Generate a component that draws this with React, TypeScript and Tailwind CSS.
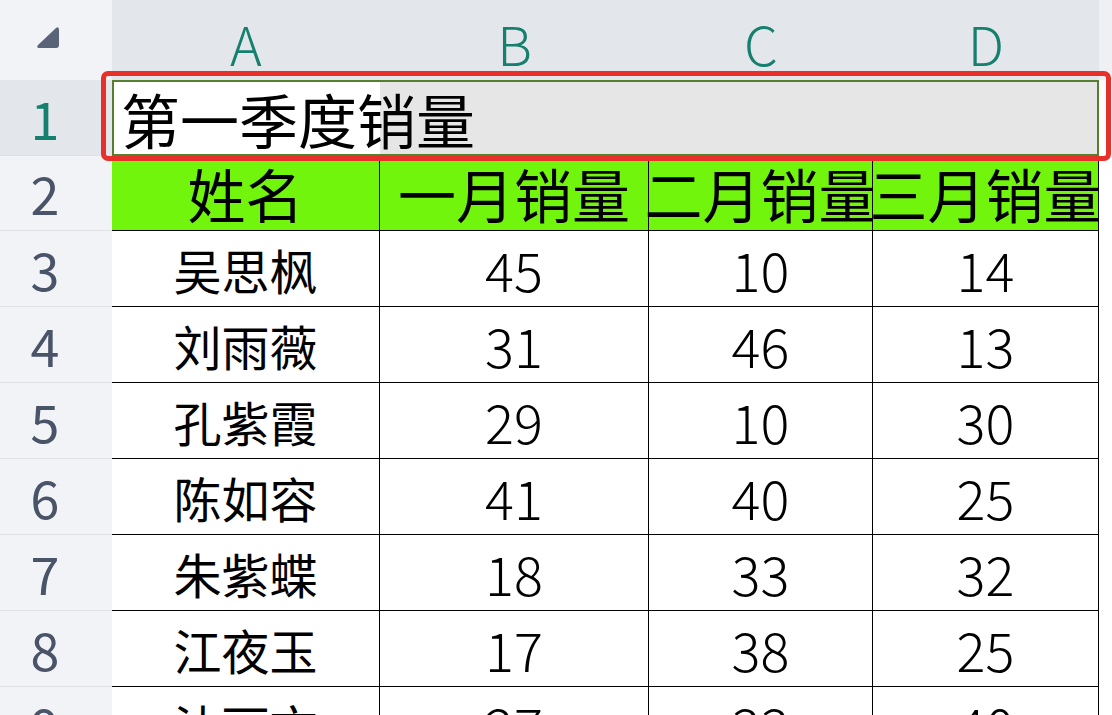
const rows: [string, number, number, number][] = [
  ['吴思枫', 45, 10, 14],
  ['刘雨薇', 31, 46, 13],
  ['孔紫霞', 29, 10, 30],
  ['陈如容', 41, 40, 25],
  ['朱紫蝶', 18, 33, 32],
  ['江夜玉', 17, 38, 25],
  ['沈丽文', 27, 33, 40],
];

const font = { fontFamily: '"Noto Sans CJK SC", "Noto Sans", sans-serif' };

function RowHead({ n, active }: { n: number; active?: boolean }) {
  return (
    <div
      className={`flex items-center justify-center border-b border-[#dde1e6] pr-[22px] text-[52px] leading-none ${
        active ? 'bg-[#e3e6ea] text-[#16806f]' : 'bg-[#f1f3f6] text-[#4a5468]'
      }`}
    >
      {n}
    </div>
  );
}

export default function App() {
  return (
    <div className="relative h-[715px] w-[1112px] overflow-hidden bg-white" style={font}>
      <div className="grid grid-cols-[112px_268px_269px_224px_226px_1fr] grid-rows-[80px_76px_75px_repeat(7,76px)]">
        {/* corner */}
        <div className="flex items-center justify-center bg-[#f1f3f6] pb-[4px] pr-[16px]">
          <svg width="26" height="24" viewBox="0 0 26 24">
            <path d="M21 2 Q24 0 24 4 L24 19 Q24 22 21 22 L4 22 Q1 22 3 19 Z" fill="#5a6478" />
          </svg>
        </div>
        {['A', 'B', 'C', 'D'].map((c) => (
          <div key={c} className="flex items-center justify-center bg-[#e3e6ea] pt-[6px] text-[54px] font-light leading-none text-[#16806f]">
            {c}
          </div>
        ))}
        <div className="bg-[#eef0f3]" />

        {/* row 1 */}
        <RowHead n={1} active />
        <div className="col-span-4 flex items-center overflow-visible whitespace-nowrap border-2 border-[#56802e] bg-[linear-gradient(to_right,#ffffff_266px,#e6e6e6_266px)] pl-[7px] text-[59px] leading-none text-black">
          第一季度销量
        </div>
        <div />

        {/* row 2 */}
        <RowHead n={2} />
        {['姓名', '一月销量', '二月销量', '三月销量'].map((h) => (
          <div
            key={h}
            className="flex items-center justify-center overflow-visible whitespace-nowrap border-b border-r border-black bg-[#72f50c] text-[58px] leading-none text-black"
          >
            {h}
          </div>
        ))}
        <div />

        {rows.map(([name, a, b, c], i) => (
          <div key={name} className="contents">
            <RowHead n={i + 3} />
            <div className="flex items-center justify-center border-b border-r border-black text-[48px] leading-none text-black">
              {name}
            </div>
            {[a, b, c].map((v, j) => (
              <div key={j} className="flex items-center justify-center border-b border-r border-black text-[54px] font-light leading-none text-black">
                {v}
              </div>
            ))}
            <div />
          </div>
        ))}
      </div>

      {/* annotation box */}
      <div className="absolute left-[101px] top-[71px] h-[90px] w-[1010px] rounded-[7px] border-[5px] border-[#e8302a]" />
    </div>
  );
}
